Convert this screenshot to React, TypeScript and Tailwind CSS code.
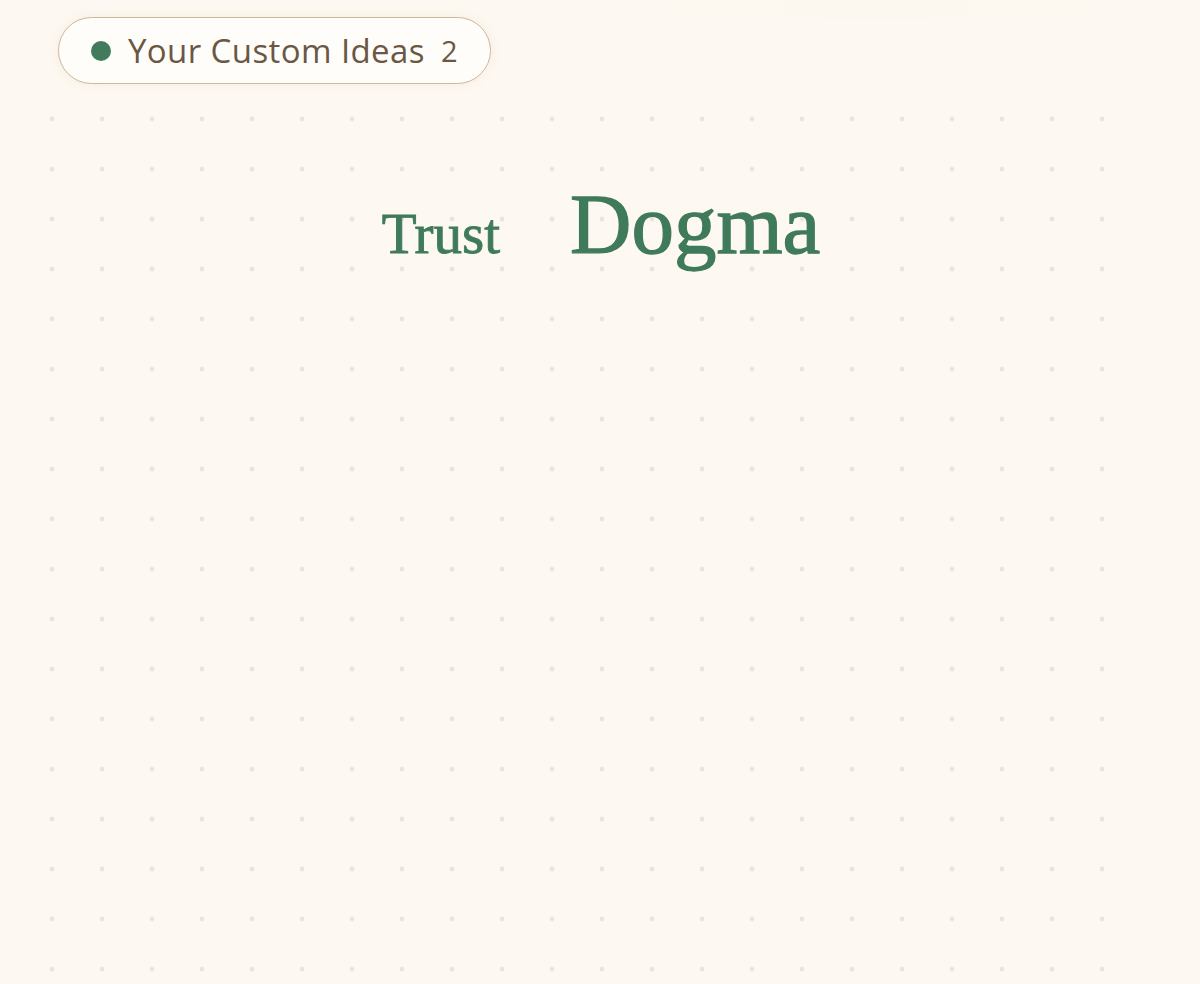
import React from 'react';

export default function App() {
  return (
    <div className="relative min-h-screen w-full overflow-hidden bg-[#fdf8f1] font-['Inter',sans-serif]">
      {/* faint dot grid */}
      <div className="absolute left-[27px] top-[94px] h-[900px] w-[1100px] bg-[radial-gradient(circle,#ebe4da_2px,transparent_2.8px)] bg-[size:50px_50px]" />
      {/* soft highlight along the top */}
      <div className="absolute left-[600px] top-0 h-[20px] w-[560px] bg-gradient-to-r from-transparent via-[#fcf8ef] to-transparent" />

      <div className="relative flex flex-col">
        <div className="pl-[58px] pt-[17px]">
          <div className="inline-flex h-[67px] w-[433px] items-center rounded-full border border-[#cdb89a] bg-[#fffdf9] pl-[32px] shadow-[0_0_12px_rgba(205,184,154,0.15)]">
            <span className="h-[20px] w-[20px] rounded-full bg-[#417b5c]" />
            <span className="ml-[17px] text-[33px] font-medium leading-none tracking-[0.4px] text-[#6a5744] font-['Open_Sans',sans-serif]">
              Your Custom Ideas
            </span>
            <span className="ml-[16px] text-[29px] leading-none text-[#6a5744] font-['Open_Sans',sans-serif]">2</span>
          </div>
        </div>

        <div className="mt-[98px] flex items-baseline justify-center pl-[2px] font-['Liberation_Serif',serif] text-[#3f7a5a]">
          <span className="text-[57px] leading-none [-webkit-text-stroke:0.9px_#3f7a5a]">Trust</span>
          <span className="ml-[70px] text-[85px] leading-none [-webkit-text-stroke:1.3px_#3f7a5a]">Dogma</span>
        </div>
      </div>
    </div>
  );
}
